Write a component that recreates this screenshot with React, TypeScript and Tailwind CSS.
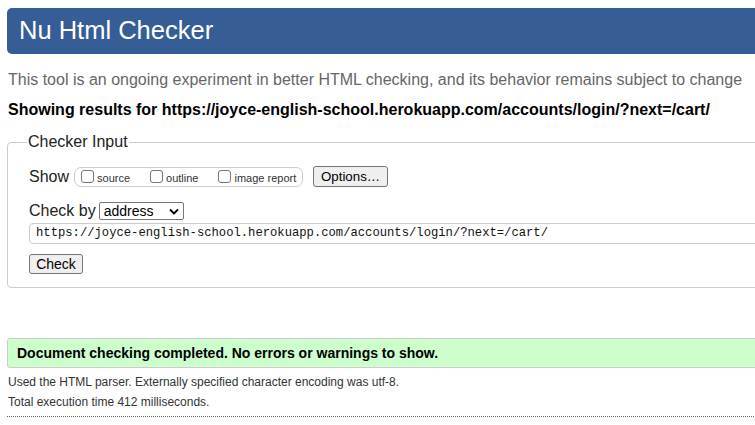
import { type FC } from 'react';

const URL = 'https://joyce-english-school.herokuapp.com/accounts/login/?next=/cart/';

const Check: FC<{ label: string }> = ({ label }) => (
  <label className="flex items-end gap-[3px] whitespace-nowrap text-[11px] leading-[12px] text-[#333]">
    <span className="mb-[1px] inline-block h-[13px] w-[13px] rounded-[3px] border border-[#767676] bg-white" />
    {label}
  </label>
);

const App: FC = () => {
  return (
    <div className="h-[425px] w-[755px] overflow-hidden bg-white font-['Liberation_Sans',Arial,sans-serif] text-black">
      <div className="w-[820px] pl-[7px] pt-[8px]">
        <header className="flex h-[46px] items-center rounded-[5px] bg-[#365d95] pl-[12px]">
          <h1 className="text-[25.5px] leading-none text-white">Nu Html Checker</h1>
        </header>

        <p className="mt-[17px] pl-[1px] text-[16px] leading-[18px] text-[#666]">
          This tool is an ongoing experiment in better HTML checking, and its behavior remains subject to change
        </p>
        <p className="mt-[12px] pl-[1px] text-[16px] font-bold leading-[18px]">
          Showing results for {URL}
        </p>

        <fieldset className="mt-[14px] h-[155px] rounded-[4px] border border-[#ccc] px-[21px] pb-0">
          <legend className="-ml-[2px] px-[1px] text-[16px] leading-[18px] text-[#222]">Checker Input</legend>

          <div className="mt-[15px] flex items-center">
            <span className="text-[16px] leading-[18px] text-[#222]">Show</span>
            <div className="ml-[5px] flex h-[20px] w-[229px] items-center gap-[20px] rounded-[7px] border border-[#ccc] pl-[6px]">
              <Check label="source" />
              <Check label="outline" />
              <Check label="image report" />
            </div>
            <button
              type="button"
              className="ml-[10px] h-[21px] w-[75px] rounded-[3px] border border-[#767676] bg-[#efefef] text-[13.3px] leading-none text-black"
            >
              Options…
            </button>
          </div>

          <div className="mt-[15px] flex items-center">
            <span className="text-[16px] leading-[18px] text-[#222]">Check by</span>
            <div className="ml-[3px] flex h-[18px] w-[85px] items-center justify-between rounded-[2px] border border-[#767676] bg-white pl-[4px] pr-[4px]">
              <span className="text-[14px] leading-none">address</span>
              <svg width="10" height="7" viewBox="0 0 10 7" className="mt-[1px]">
                <path d="M1 1.5 L5 5.5 L9 1.5" fill="none" stroke="#000" strokeWidth="1.8" />
              </svg>
            </div>
          </div>

          <div className="mt-[3px] flex h-[21px] items-center rounded-[4px] border border-[#ccc] pl-[6px]">
            <span className="font-['Liberation_Mono',monospace] text-[12.2px] leading-none text-[#111]">{URL}</span>
          </div>

          <button
            type="button"
            className="mt-[10px] h-[20px] w-[54px] rounded-[3px] border border-[#767676] bg-[#efefef] text-[14px] leading-none"
          >
            Check
          </button>
        </fieldset>

        <div className="mt-[50px] flex h-[30px] items-center rounded-[3px] border border-[#ccc] bg-[#ccffcc] pl-[9px]">
          <span className="text-[14px] font-bold leading-none">Document checking completed. No errors or warnings to show.</span>
        </div>

        <p className="mt-[7px] pl-[1px] text-[12px] leading-[14px] text-[#333]">
          Used the HTML parser. Externally specified character encoding was utf-8.
        </p>
        <p className="mt-[6px] pl-[1px] text-[12px] leading-[14px] text-[#333]">
          Total execution time 412 milliseconds.
        </p>
        <div className="mt-[7px] border-t border-dotted border-[#666]" />
      </div>
    </div>
  );
};

export default App;
